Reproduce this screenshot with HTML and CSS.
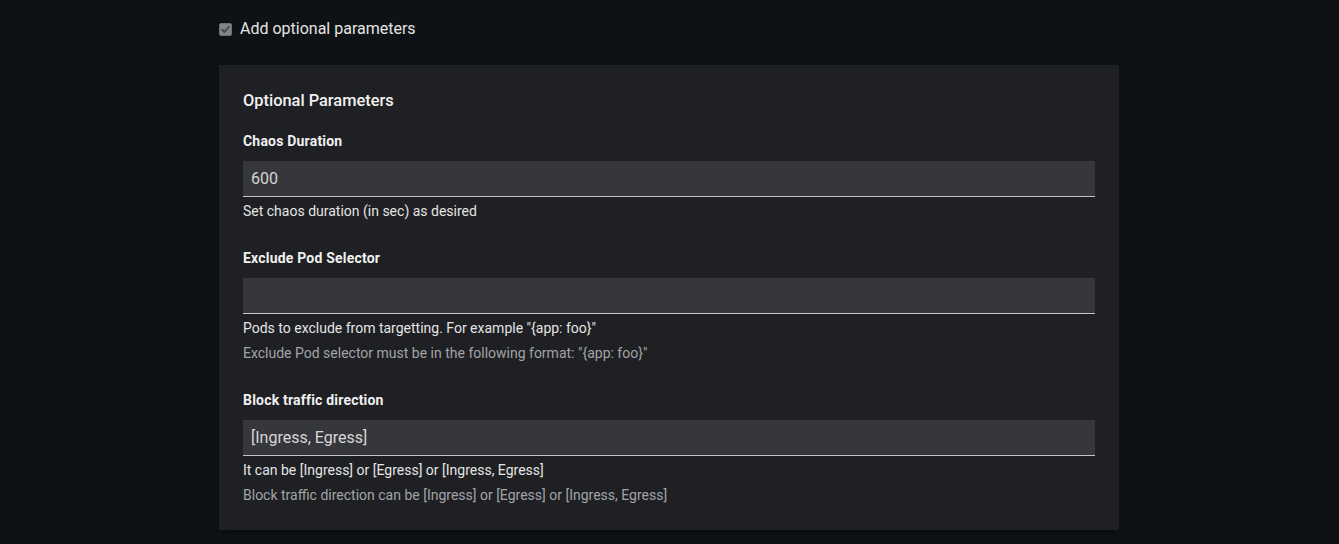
FILE: index.html
```html
<!DOCTYPE html>
<html lang="en">
<head>
<meta charset="utf-8">
<title>Optional Parameters</title>
<link rel="stylesheet" href="styles.css">
</head>
<body>
<div class="page">
  <label class="check-row">
    <span class="checkbox" aria-hidden="true">
      <svg viewBox="0 0 13 13" width="13" height="13"><path d="M3.2 6.8 L5.5 9 L9.9 3.9" fill="none" stroke="#46484b" stroke-width="1.8" stroke-linecap="round" stroke-linejoin="round"/></svg>
    </span>
    <span class="check-label">Add optional parameters</span>
  </label>

  <section class="card">
    <h2 class="card-title">Optional Parameters</h2>

    <div class="form">
      <div class="group">
        <div class="label">Chaos Duration</div>
        <div class="input">600</div>
        <div class="helper">Set chaos duration (in sec) as desired</div>
      </div>

      <div class="group">
        <div class="label">Exclude Pod Selector</div>
        <div class="input"></div>
        <div class="helper">Pods to exclude from targetting. For example "{app: foo}"</div>
        <div class="helper muted">Exclude Pod selector must be in the following format: "{app: foo}"</div>
      </div>

      <div class="group">
        <div class="label">Block traffic direction</div>
        <div class="input">[Ingress, Egress]</div>
        <div class="helper">It can be [Ingress] or [Egress] or [Ingress, Egress]</div>
        <div class="helper muted">Block traffic direction can be [Ingress] or [Egress] or [Ingress, Egress]</div>
      </div>
    </div>
  </section>
</div>
</body>
</html>
```
FILE: styles.css
```css
html, body {
  margin: 0;
  height: 100%;
}
body {
  background: #0f1214;
  color: #e6e6e6;
  font-family: Roboto, "Liberation Sans", sans-serif;
  font-size: 14px;
}
.page {
  width: 900px;
  margin-left: 219px;
  padding-top: 17px;
  display: flex;
  flex-direction: column;
  gap: 24px;
}
.check-row {
  display: flex;
  align-items: center;
  gap: 8px;
  height: 24px;
}
.checkbox {
  width: 13px;
  height: 13px;
  box-sizing: border-box;
  border-radius: 2px;
  background: #818385;
  border: 1px solid #6d6f72;
  display: flex;
  align-items: center;
  justify-content: center;
  margin-top: 1px;
}
.checkbox svg {
  flex: none;
}
.check-label {
  font-size: 16px;
  line-height: 24px;
  color: #e4e4e4;
}
.card {
  background: #1f2023;
  padding: 25px 24px 24px;
  box-shadow: 0 3px 6px rgba(0, 0, 0, 0.35);
}
.card-title {
  margin: 0 0 19px;
  font-size: 16.4px;
  line-height: 22px;
  font-weight: 500;
  color: #f2f2f2;
}
.form {
  display: flex;
  flex-direction: column;
  gap: 26px;
}
.group {
  display: flex;
  flex-direction: column;
}
.label {
  font-weight: 700;
  line-height: 21px;
  letter-spacing: 0.2px;
  color: #f0f0f0;
  margin-bottom: 9px;
}
.input {
  height: 35px;
  border-bottom: 1px solid #c3c5c7;
  background: #36373b;
  padding: 0 8px;
  font-size: 16px;
  line-height: 35px;
  color: #d6d6d6;
}
.helper {
  margin-top: 4px;
  line-height: 21px;
  color: #e4e4e4;
}
.helper.muted {
  color: #a2a4a7;
}
```
